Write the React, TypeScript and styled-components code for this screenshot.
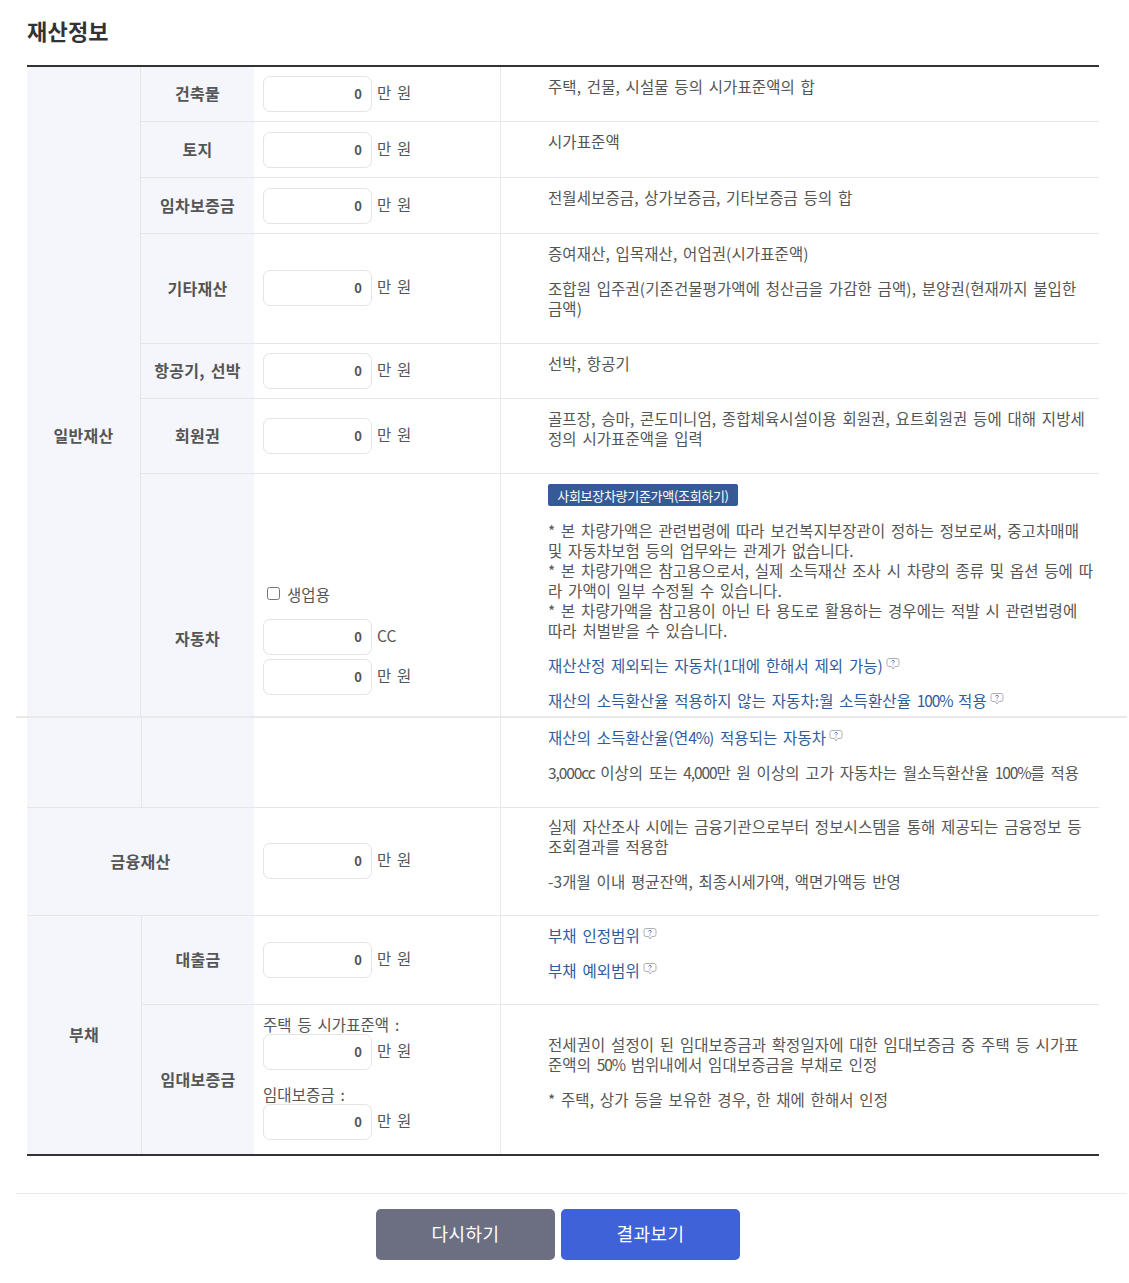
import styled, { createGlobalStyle } from "styled-components"

const GlobalStyle = createGlobalStyle`
    html, body {
        margin: 0;
        padding: 0;
        background: #fff;
    }
    body {
        font-family: "Noto Sans CJK KR", "Noto Sans", sans-serif;
        font-size: 15.5px;
        color: #555;
    }
`

const Page = styled.div`
    width: 1129px;
    box-sizing: border-box;
    padding: 0 2px 0 16px;
`

const Title = styled.h2`
    margin: 0;
    padding: 16px 0 0 11px;
    height: 65px;
    box-sizing: border-box;
    font-size: 22px;
    line-height: 28px;
    letter-spacing: 0.2px;
    font-weight: 700;
    color: #333;
`

const Table = styled.table<{ $last?: boolean }>`
    margin-left: 11px;
    width: 1072px;
    table-layout: fixed;
    border-collapse: separate;
    border-spacing: 0;
    border-top: ${(props) => (props.$last ? "0" : "2px solid #333")};
    border-bottom: ${(props) => (props.$last ? "2px solid #333" : "0")};
`

const Row = styled.tr<{ $h: number }>`
    height: ${(props) => props.$h}px;
`

const Head = styled.th<{ $line?: boolean; $left?: boolean; $push?: number }>`
    box-sizing: border-box;
    padding: ${(props) => props.$push ?? 0}px 0 2px;
    background: #f5f6fb;
    font-size: 16px;
    letter-spacing: 0.3px;
    word-spacing: 2px;
    font-weight: 700;
    color: #555;
    text-align: center;
    vertical-align: middle;
    border-bottom: ${(props) => (props.$line ? "1px solid #e6e6e6" : "0")};
    border-left: ${(props) => (props.$left ? "1px solid #e6e6e6" : "0")};
`

const InputCell = styled.td<{ $line?: boolean; $push?: number; $pull?: number }>`
    box-sizing: border-box;
    padding: ${(props) => props.$push ?? 0}px 0 ${(props) => props.$pull ?? 0}px 9px;
    vertical-align: middle;
    border-bottom: ${(props) => (props.$line ? "1px solid #e6e6e6" : "0")};
`

const InfoCell = styled.td<{ $line?: boolean; $top?: number }>`
    box-sizing: border-box;
    padding: ${(props) => props.$top ?? 9}px 0 0 47px;
    vertical-align: top;
    font-size: 15.5px;
    line-height: 20px;
    letter-spacing: 0.1px;
    word-spacing: 2.1px;
    white-space: nowrap;
    color: #555;
    border-left: 1px solid #e9e9e9;
    border-bottom: ${(props) => (props.$line ? "1px solid #e6e6e6" : "0")};
`

const Para = styled.p`
    margin: 0 0 15px;

    &:last-child {
        margin-bottom: 0;
    }
`

const Num = styled.span`
    letter-spacing: -1.1px;
`

const Field = styled.div`
    display: flex;
    align-items: center;
    gap: 5px;
`

const FieldStack = styled.div`
    display: flex;
    flex-direction: column;
    gap: 4px;
`

const Amount = styled.input`
    box-sizing: border-box;
    width: 109px;
    height: 36px;
    padding: 0 9px 1px 0;
    background: #fff;
    border: 1px solid #e4e4e4;
    border-radius: 7px;
    outline: none;
    text-align: right;
    font-family: "Noto Sans CJK KR", "Noto Sans", sans-serif;
    font-size: 13px;
    font-weight: 700;
    color: #555;
`

const Unit = styled.span`
    font-size: 15.5px;
    line-height: 20px;
    letter-spacing: 0.1px;
    word-spacing: 2.1px;
    color: #555;
    position: relative;
    top: -2px;
`

const FieldLabel = styled.div<{ $gap?: number }>`
    margin-top: ${(props) => props.$gap ?? 0}px;
    font-size: 15.5px;
    line-height: 20px;
    letter-spacing: 0.1px;
    word-spacing: 2.1px;
    color: #555;
`

const CheckLine = styled.label`
    display: flex;
    align-items: center;
    gap: 7px;
    margin: 0 0 15px 4px;
    font-size: 15.5px;
    line-height: 20px;
    letter-spacing: 0.1px;
`

const Check = styled.input`
    width: 13px;
    height: 13px;
    margin: 0;
`

const LookupButton = styled.button`
    display: block;
    box-sizing: border-box;
    width: 190px;
    height: 22px;
    margin: 1px 0 14px;
    padding: 0;
    background: #365a96;
    border: 0;
    border-radius: 2px;
    color: #fff;
    font-family: "Noto Sans CJK KR", "Noto Sans", sans-serif;
    font-size: 13px;
    letter-spacing: -0.3px;
`

const HelpLink = styled.a`
    display: flex;
    align-items: center;
    gap: 3px;
    color: #2f5c9e;
    text-decoration: none;

    svg {
        margin-top: -3px;
    }
`

const Divider = styled.hr`
    margin: 0;
    height: 2px;
    border: 0;
    background: #e9e9e9;
`

const Actions = styled.div`
    display: flex;
    justify-content: center;
    gap: 6px;
    margin-top: 37px;
    padding: 15px 27px 23px 0;
    border-top: 1px solid #e9e9e9;
`

const ActionButton = styled.button<{ $primary?: boolean }>`
    width: 179px;
    height: 51px;
    padding: 0 0 3px;
    background: ${(props) => (props.$primary ? "#3f62d8" : "#6c6f82")};
    border: 0;
    border-radius: 5px;
    color: #fff;
    font-family: "Noto Sans CJK KR", "Noto Sans", sans-serif;
    font-size: 18px;
    letter-spacing: 0.4px;
`

function HelpIcon() {
    return (
        <svg width="14" height="14" viewBox="0 0 14 14" aria-hidden="true">
            <path
                d="M3 1.500h8a2 2 0 0 1 2 2v4a2 2 0 0 1-2 2H9l-2 2.500L5.500 9.500H3a2 2 0 0 1-2-2v-4a2 2 0 0 1 2-2z"
                fill="#fff"
                stroke="#b0b0b0"
                strokeWidth="1"
            />
            <path
                d="M5.600 4.400c.2-.7.8-1 1.400-1 .8 0 1.400.5 1.400 1.200 0 .9-1.400 1-1.400 1.900"
                fill="none"
                stroke="#3f62d8"
                strokeWidth="0.9"
            />
            <circle cx="7" cy="7.900" r="0.500" fill="#3f62d8" />
        </svg>
    )
}

function Help({ children }: { children: React.ReactNode }) {
    return (
        <HelpLink href="#">
            <span>{children}</span>
            <HelpIcon />
        </HelpLink>
    )
}

function Money({ unit = "만 원" }: { unit?: string }) {
    return (
        <Field>
            <Amount defaultValue="0" />
            <Unit>{unit}</Unit>
        </Field>
    )
}

function App() {
    return (
        <Page>
            <GlobalStyle />
            <Title>재산정보</Title>
            <Table>
                <colgroup>
                    <col width="113" />
                    <col width="114" />
                    <col width="246" />
                    <col width="599" />
                </colgroup>
                <tbody>
                    <Row $h={55}>
                        <Head rowSpan={7} $push={88}>일반재산</Head>
                        <Head $line $left>건축물</Head>
                        <InputCell $line><Money /></InputCell>
                        <InfoCell $line>주택, 건물, 시설물 등의 시가표준액의 합</InfoCell>
                    </Row>
                    <Row $h={56}>
                        <Head $line $left>토지</Head>
                        <InputCell $line><Money /></InputCell>
                        <InfoCell $line>시가표준액</InfoCell>
                    </Row>
                    <Row $h={56}>
                        <Head $line $left>임차보증금</Head>
                        <InputCell $line><Money /></InputCell>
                        <InfoCell $line>전월세보증금, 상가보증금, 기타보증금 등의 합</InfoCell>
                    </Row>
                    <Row $h={110}>
                        <Head $line $left>기타재산</Head>
                        <InputCell $line $pull={2}><Money /></InputCell>
                        <InfoCell $line>
                            <Para>증여재산, 입목재산, 어업권(시가표준액)</Para>
                            <Para>
                                조합원 입주권(기존건물평가액에 청산금을 가감한 금액), 분양권(현재까지 불입한
                                <br />
                                금액)
                            </Para>
                        </InfoCell>
                    </Row>
                    <Row $h={55}>
                        <Head $line $left>항공기, 선박</Head>
                        <InputCell $line><Money /></InputCell>
                        <InfoCell $line>선박, 항공기</InfoCell>
                    </Row>
                    <Row $h={75}>
                        <Head $line $left>회원권</Head>
                        <InputCell $line><Money /></InputCell>
                        <InfoCell $line>
                            골프장, 승마, 콘도미니엄, 종합체육시설이용 회원권, 요트회원권 등에 대해 지방세
                            <br />
                            정의 시가표준액을 입력
                        </InfoCell>
                    </Row>
                    <Row $h={242}>
                        <Head $left $push={88}>자동차</Head>
                        <InputCell $push={88}>
                            <CheckLine>
                                <Check type="checkbox" />
                                생업용
                            </CheckLine>
                            <FieldStack>
                                <Money unit="CC" />
                                <Money />
                            </FieldStack>
                        </InputCell>
                        <InfoCell>
                            <LookupButton>사회보장차량기준가액(조회하기)</LookupButton>
                            <Para>
                                * 본 차량가액은 관련법령에 따라 보건복지부장관이 정하는 정보로써, 중고차매매
                                <br />
                                및 자동차보험 등의 업무와는 관계가 없습니다.
                                <br />
                                * 본 차량가액은 참고용으로서, 실제 소득재산 조사 시 차량의 종류 및 옵션 등에 따
                                <br />
                                라 가액이 일부 수정될 수 있습니다.
                                <br />
                                * 본 차량가액을 참고용이 아닌 타 용도로 활용하는 경우에는 적발 시 관련법령에
                                <br />
                                따라 처벌받을 수 있습니다.
                            </Para>
                            <Para><Help>재산산정 제외되는 자동차(1대에 한해서 제외 가능)</Help></Para>
                            <Para><Help>재산의 소득환산율 적용하지 않는 자동차:월 소득환산율 <Num>100%</Num> 적용</Help></Para>
                        </InfoCell>
                    </Row>
                </tbody>
            </Table>
            <Divider />
            <Table $last>
                <colgroup>
                    <col width="114" />
                    <col width="113" />
                    <col width="246" />
                    <col width="599" />
                </colgroup>
                <tbody>
                    <Row $h={90}>
                        <Head $line />
                        <Head $line $left />
                        <InputCell $line />
                        <InfoCell $line>
                            <Para><Help>재산의 소득환산율(연<Num>4%</Num>) 적용되는 자동차</Help></Para>
                            <Para><Num>3,000cc</Num> 이상의 또는 <Num>4,000</Num>만 원 이상의 고가 자동차는 월소득환산율 <Num>100%</Num>를 적용</Para>
                        </InfoCell>
                    </Row>
                    <Row $h={108}>
                        <Head colSpan={2} $line>금융재산</Head>
                        <InputCell $line $pull={2}><Money /></InputCell>
                        <InfoCell $line $top={8}>
                            <Para>
                                실제 자산조사 시에는 금융기관으로부터 정보시스템을 통해 제공되는 금융정보 등
                                <br />
                                조회결과를 적용함
                            </Para>
                            <Para>-3개월 이내 평균잔액, 최종시세가액, 액면가액등 반영</Para>
                        </InfoCell>
                    </Row>
                    <Row $h={89}>
                        <Head rowSpan={2}>부채</Head>
                        <Head $line $left>대출금</Head>
                        <InputCell $line><Money /></InputCell>
                        <InfoCell $line>
                            <Para><Help>부채 인정범위</Help></Para>
                            <Para><Help>부채 예외범위</Help></Para>
                        </InfoCell>
                    </Row>
                    <Row $h={149}>
                        <Head $left>임대보증금</Head>
                        <InputCell $pull={5}>
                            <FieldLabel>주택 등 시가표준액 :</FieldLabel>
                            <Money />
                            <FieldLabel $gap={14}>임대보증금 :</FieldLabel>
                            <Money />
                        </InputCell>
                        <InfoCell $top={29}>
                            <Para>
                                전세권이 설정이 된 임대보증금과 확정일자에 대한 임대보증금 중 주택 등 시가표
                                <br />
                                준액의 <Num>50%</Num> 범위내에서 임대보증금을 부채로 인정
                            </Para>
                            <Para>* 주택, 상가 등을 보유한 경우, 한 채에 한해서 인정</Para>
                        </InfoCell>
                    </Row>
                </tbody>
            </Table>
            <Actions>
                <ActionButton>다시하기</ActionButton>
                <ActionButton $primary>결과보기</ActionButton>
            </Actions>
        </Page>
    )
}

export default App
